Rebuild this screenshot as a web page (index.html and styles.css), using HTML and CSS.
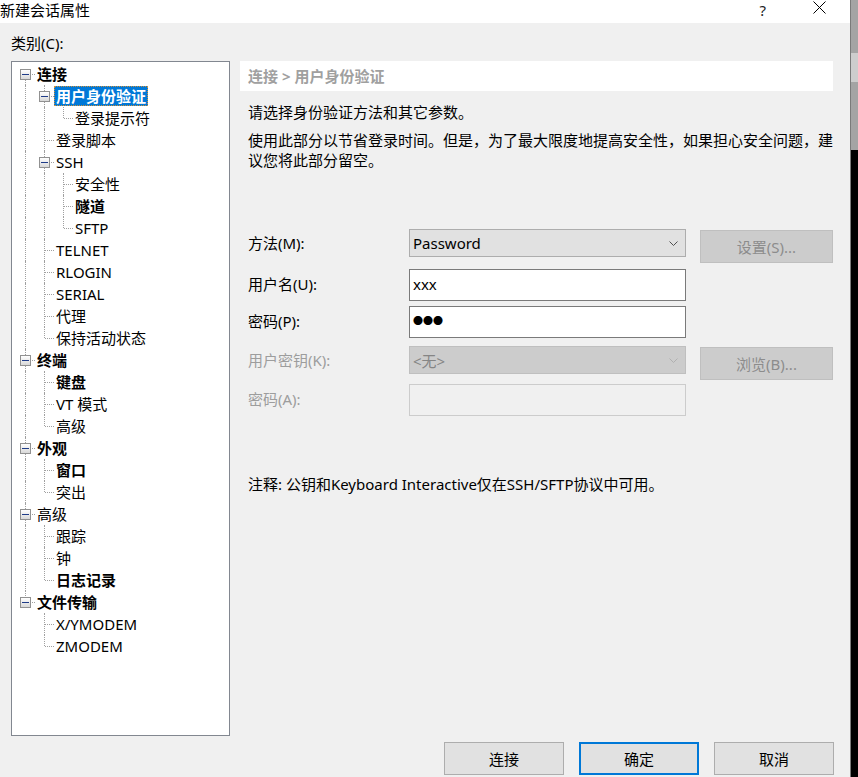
FILE: index.html
```html
<!DOCTYPE html>
<html lang="zh-CN">
<head>
    <meta charset="UTF-8">
    <title>新建会话属性</title>
    <link rel="stylesheet" href="styles.css">
</head>
<body>
<div class="screen">
    <div class="dialog">
        <div class="titlebar">
            <span class="title">新建会话属性</span>
            <span class="help">?</span>
            <span class="close">
                <svg width="13" height="13" viewBox="0 0 13 13"><path d="M0.5 0.5L12.5 12.5M12.5 0.5L0.5 12.5" stroke="#000" stroke-width="1" fill="none"/></svg>
            </span>
        </div>

        <div class="dialog-body">
            <div class="category-label">类别(C):</div>

            <div class="main">
                <!-- arbre des catégories -->
                <div class="tree">
                    <div class="row"><span class="cell f"><span class="expander"></span></span><span class="label bold">连接</span></div>
                    <div class="row"><span class="cell v"></span><span class="cell t"><span class="expander"></span></span><span class="label bold selected">用户身份验证</span></div>
                    <div class="row"><span class="cell v"></span><span class="cell v"></span><span class="cell l"></span><span class="label">登录提示符</span></div>
                    <div class="row"><span class="cell v"></span><span class="cell t"></span><span class="label">登录脚本</span></div>
                    <div class="row"><span class="cell v"></span><span class="cell t"><span class="expander"></span></span><span class="label">SSH</span></div>
                    <div class="row"><span class="cell v"></span><span class="cell v"></span><span class="cell t"></span><span class="label">安全性</span></div>
                    <div class="row"><span class="cell v"></span><span class="cell v"></span><span class="cell t"></span><span class="label bold">隧道</span></div>
                    <div class="row"><span class="cell v"></span><span class="cell v"></span><span class="cell l"></span><span class="label">SFTP</span></div>
                    <div class="row"><span class="cell v"></span><span class="cell t"></span><span class="label">TELNET</span></div>
                    <div class="row"><span class="cell v"></span><span class="cell t"></span><span class="label">RLOGIN</span></div>
                    <div class="row"><span class="cell v"></span><span class="cell t"></span><span class="label">SERIAL</span></div>
                    <div class="row"><span class="cell v"></span><span class="cell t"></span><span class="label">代理</span></div>
                    <div class="row"><span class="cell v"></span><span class="cell l"></span><span class="label">保持活动状态</span></div>
                    <div class="row"><span class="cell t"><span class="expander"></span></span><span class="label bold">终端</span></div>
                    <div class="row"><span class="cell v"></span><span class="cell t"></span><span class="label bold">键盘</span></div>
                    <div class="row"><span class="cell v"></span><span class="cell t"></span><span class="label">VT 模式</span></div>
                    <div class="row"><span class="cell v"></span><span class="cell l"></span><span class="label">高级</span></div>
                    <div class="row"><span class="cell t"><span class="expander"></span></span><span class="label bold">外观</span></div>
                    <div class="row"><span class="cell v"></span><span class="cell t"></span><span class="label bold">窗口</span></div>
                    <div class="row"><span class="cell v"></span><span class="cell l"></span><span class="label">突出</span></div>
                    <div class="row"><span class="cell t"><span class="expander"></span></span><span class="label">高级</span></div>
                    <div class="row"><span class="cell v"></span><span class="cell t"></span><span class="label">跟踪</span></div>
                    <div class="row"><span class="cell v"></span><span class="cell t"></span><span class="label">钟</span></div>
                    <div class="row"><span class="cell v"></span><span class="cell l"></span><span class="label bold">日志记录</span></div>
                    <div class="row"><span class="cell l"><span class="expander"></span></span><span class="label bold">文件传输</span></div>
                    <div class="row"><span class="cell"></span><span class="cell t"></span><span class="label">X/YMODEM</span></div>
                    <div class="row"><span class="cell"></span><span class="cell l"></span><span class="label">ZMODEM</span></div>
                </div>

                <!-- page de droite -->
                <div class="panel">
                    <div class="breadcrumb">连接 &gt; 用户身份验证</div>
                    <p class="desc first">请选择身份验证方法和其它参数。</p>
                    <p class="desc second">使用此部分以节省登录时间。但是，为了最大限度地提高安全性，如果担心安全问题，建<br>议您将此部分留空。</p>

                    <div class="form">
                        <div class="form-row r1">
                            <span class="field-label short">方法(M):</span>
                            <div class="select">
                                <span>Password</span>
                                <svg width="9" height="5" viewBox="0 0 9 5"><path d="M0.5 0.5L4.5 4.5L8.5 0.5" stroke="#505050" fill="none"/></svg>
                            </div>
                            <button class="side-btn" disabled>设置(S)...</button>
                        </div>
                        <div class="form-row r2">
                            <span class="field-label">用户名(U):</span>
                            <div class="input">xxx</div>
                        </div>
                        <div class="form-row r3">
                            <span class="field-label">密码(P):</span>
                            <div class="input dots">●●●</div>
                        </div>
                        <div class="form-row r4">
                            <span class="field-label short disabled">用户密钥(K):</span>
                            <div class="select disabled">
                                <span>&lt;无&gt;</span>
                                <svg width="9" height="5" viewBox="0 0 9 5"><path d="M0.5 0.5L4.5 4.5L8.5 0.5" stroke="#b0b0b0" fill="none"/></svg>
                            </div>
                            <button class="side-btn" disabled>浏览(B)...</button>
                        </div>
                        <div class="form-row r5">
                            <span class="field-label disabled">密码(A):</span>
                            <div class="input disabled"></div>
                        </div>
                    </div>

                    <p class="note">注释: 公钥和Keyboard Interactive仅在SSH/SFTP协议中可用。</p>
                </div>
            </div>

            <div class="footer">
                <button class="btn">连接</button>
                <button class="btn default">确定</button>
                <button class="btn">取消</button>
            </div>
        </div>
    </div>
    <div class="edge"></div>
</div>
</body>
</html>
```

FILE: styles.css
```css
body {
    margin: 0;
    font-family: "Noto Sans", "Noto Sans CJK SC", sans-serif;
    font-size: 15px;
    color: #000;
    background: #000;
}

.screen {
    display: flex;
    width: 858px;
    height: 777px;
    overflow: hidden;
}

.dialog {
    width: 850px;
    height: 777px;
    background-color: #f0f0f0;
    flex: none;
}

.edge {
    width: 8px;
    flex: none;
    background: linear-gradient(#a4a4a4 0, #a4a4a4 53px, #cdcdcd 53px, #cdcdcd 82px, #a4a4a4 82px, #a4a4a4 150px, #000 150px);
    border-left: 1px solid #7a7a7a;
    box-sizing: border-box;
}

/* barre de titre */
.titlebar {
    height: 23px;
    background: #fff;
    display: flex;
    align-items: flex-start;
}

.title {
    margin-left: 0;
    line-height: 20px;
}

.help {
    margin-left: auto;
    line-height: 20px;
    color: #222;
}

.close {
    display: flex;
    margin-left: 47px;
    margin-right: 24px;
    margin-top: 1px;
}

.dialog-body {
    padding: 0 17px 0 11px;
}

.category-label {
    padding-top: 10px;
    height: 20px;
    line-height: 20px;
    margin-bottom: 8px;
}

.main {
    display: flex;
    gap: 10px;
}

/* arbre */
.tree {
    width: 219px;
    height: 675px;
    box-sizing: border-box;
    border: 1px solid #828790;
    background: #fff;
    padding: 1px 0 0 4px;
}

.row {
    display: flex;
    align-items: center;
    height: 22px;
}

.cell {
    position: relative;
    width: 19px;
    height: 22px;
    flex: none;
}

.cell.v::before, .cell.t::before, .cell.l::before, .cell.f::before {
    content: '';
    position: absolute;
    left: 9px;
    top: 0;
    bottom: 0;
    border-left: 1px dotted #a0a0a0;
}

.cell.l::before {
    bottom: 11px;
}

.cell.f::before {
    top: 11px;
}

.cell.t::after, .cell.l::after, .cell.f::after {
    content: '';
    position: absolute;
    left: 10px;
    top: 11px;
    width: 9px;
    border-top: 1px dotted #a0a0a0;
}

.expander {
    position: absolute;
    left: 4px;
    top: 6px;
    width: 9px;
    height: 9px;
    border: 1px solid #919191;
    background: linear-gradient(#ffffff, #d8d8d8);
    z-index: 1;
}

.expander::before {
    content: '';
    position: absolute;
    left: 1px;
    top: 4px;
    width: 7px;
    height: 1px;
    background: #1f3c88;
}

.label {
    height: 18px;
    line-height: 18px;
    padding: 0 1px;
    border: 1px solid transparent;
    white-space: nowrap;
}

.bold {
    font-weight: bold;
}

.label.selected {
    background: #0078d7;
    color: #fff;
    border: 1px dotted #d0903a;
}

/* panneau */
.panel {
    width: 593px;
}

.breadcrumb {
    height: 30px;
    line-height: 30px;
    background: #fff;
    padding-left: 8px;
    color: #a0a0a0;
    font-weight: bold;
}

.desc, .note {
    margin: 0;
    padding-left: 8px;
    line-height: 20px;
    white-space: nowrap;
}

.desc.first {
    margin-top: 11px;
}

.desc.second {
    margin-top: 8px;
}

.form {
    margin-top: 59px;
    padding-left: 8px;
}

.form-row {
    display: flex;
    align-items: flex-start;
}

.r1 { height: 40px; }
.r2 { height: 37px; }
.r3 { height: 40px; }
.r4 { height: 38px; }
.r5 { height: 32px; }

.field-label {
    width: 161px;
    line-height: 31px;
    flex: none;
}

.field-label.short {
    line-height: 28px;
}

.field-label.disabled {
    color: #9d9d9d;
}

.select {
    width: 277px;
    height: 28px;
    box-sizing: border-box;
    border: 1px solid #adadad;
    background: #e1e1e1;
    display: flex;
    align-items: center;
    justify-content: space-between;
    padding: 0 7px 0 3px;
}

.select.disabled {
    background: #cccccc;
    border-color: #bfbfbf;
    color: #858585;
}

.input {
    width: 277px;
    height: 32px;
    box-sizing: border-box;
    border: 1px solid #7a7a7a;
    background: #fff;
    line-height: 28px;
    padding-left: 3px;
}

.input.dots {
    font-size: 10px;
    letter-spacing: 0;
    line-height: 29px;
}

.input.disabled {
    background: #f0f0f0;
    border-color: #cccccc;
}

.side-btn {
    margin: 1px 0 0 14px;
    width: 133px;
    height: 33px;
    border: 1px solid #bfbfbf;
    background: #cccccc;
    color: #8c8c8c;
    font-family: inherit;
    font-size: 15px;
    padding: 0;
}

.note {
    margin-top: 58px;
}

/* boutons du bas */
.footer {
    display: flex;
    justify-content: flex-end;
    gap: 15px;
    margin-top: 6px;
    margin-right: -1px;
}

.btn {
    width: 120px;
    height: 33px;
    border: 1px solid #adadad;
    background: #e1e1e1;
    font-family: inherit;
    font-size: 15px;
    color: #000;
    padding: 0;
}

.btn.default {
    border: 2px solid #0078d7;
}
```
